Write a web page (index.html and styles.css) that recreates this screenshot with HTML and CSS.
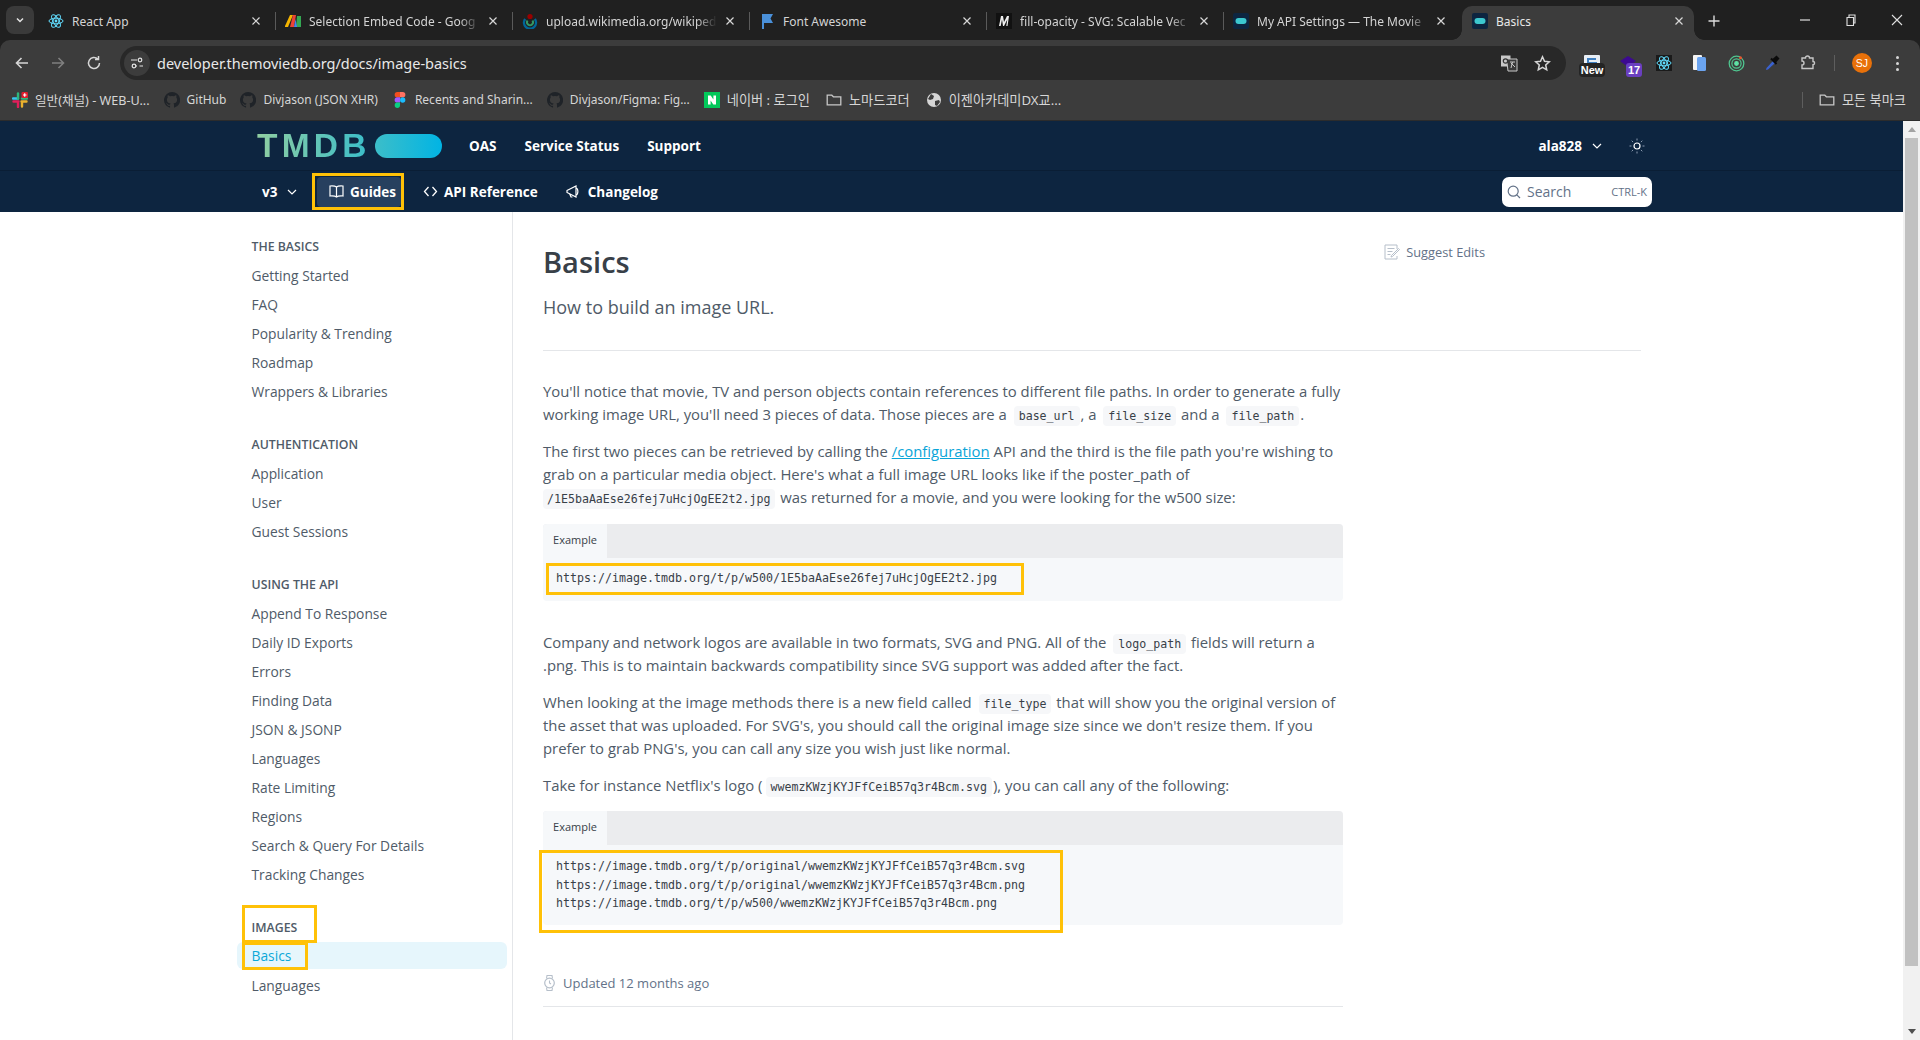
FILE: index.html
```html
<!DOCTYPE html>
<html lang="en">
<head>
<meta charset="utf-8">
<title>Basics</title>
<link rel="stylesheet" href="styles.css">
</head>
<body>
<svg class="defs" width="0" height="0" aria-hidden="true">
  <defs>
    <symbol id="tmdb-ico" viewBox="0 0 16 16"><rect width="16" height="16" rx="2" fill="#0d2540"/><rect x="2.5" y="5" width="11" height="6" rx="3" fill="#3cc8cf"/></symbol>
    <symbol id="react-ico" viewBox="0 0 16 16"><g fill="none" stroke="#61dafb" stroke-width="1"><ellipse cx="8" cy="8" rx="7" ry="2.8"/><ellipse cx="8" cy="8" rx="7" ry="2.8" transform="rotate(60 8 8)"/><ellipse cx="8" cy="8" rx="7" ry="2.8" transform="rotate(120 8 8)"/></g><circle cx="8" cy="8" r="1.4" fill="#61dafb"/></symbol>
    <symbol id="gh-ico" viewBox="0 0 16 16"><path fill="#1f2328" d="M8 0a8 8 0 0 0-2.53 15.59c.4.07.55-.17.55-.38v-1.34c-2.23.48-2.7-1.07-2.7-1.07-.36-.93-.89-1.17-.89-1.17-.73-.5.05-.49.05-.49.8.06 1.23.83 1.23.83.72 1.22 1.87.87 2.33.66.07-.52.28-.87.5-1.07-1.78-.2-3.64-.89-3.64-3.95 0-.87.31-1.59.82-2.15-.08-.2-.36-1.02.08-2.12 0 0 .67-.22 2.2.82a7.6 7.6 0 0 1 4 0c1.53-1.04 2.2-.82 2.2-.82.44 1.1.16 1.92.08 2.12.51.56.82 1.27.82 2.15 0 3.07-1.87 3.75-3.65 3.95.29.25.54.73.54 1.48v2.2c0 .21.15.46.55.38A8 8 0 0 0 8 0z"/></symbol>
    <symbol id="folder-ico" viewBox="0 0 16 16"><path fill="none" stroke="#c7c7c7" stroke-width="1.3" d="M1.2 3.2h4.6l1.6 1.6h7.4v8H1.2z"/></symbol>
    <symbol id="x-ico" viewBox="0 0 10 10"><path stroke="#d8d8d8" stroke-width="1.2" d="M1.5 1.5l7 7M8.5 1.5l-7 7"/></symbol>
  </defs>
</svg>

<div class="chrome">
  <div class="tabstrip">
    <div class="tab-menu"><svg width="10" height="10" viewBox="0 0 10 10"><path d="M2 3.5l3 3 3-3" fill="none" stroke="#e3e3e3" stroke-width="1.5"/></svg></div>
    <div class="tab">
      <svg class="fav" width="16" height="16"><use href="#react-ico"/></svg><span class="tab-t">React App</span>
      <svg class="tab-x" width="10" height="10"><use href="#x-ico"/></svg>
    </div>
    <div class="tab">
      <svg class="fav" width="16" height="16" viewBox="0 0 16 16"><path fill="#f4b400" d="M0 13L5 2h3L3 14H0z"/><path fill="#ea4335" d="M5 14L8 2h3L9 14z"/><path fill="#34a853" d="M11 14l1-11h4v11z"/><path fill="#4285f4" d="M9 14l1.500-8 1.500 8z"/></svg><span class="tab-t tab-fade">Selection Embed Code - Goog</span>
      <svg class="tab-x" width="10" height="10"><use href="#x-ico"/></svg>
    </div>
    <div class="tab">
      <svg class="fav" width="16" height="16" viewBox="0 0 16 16"><path fill="none" stroke="#006699" stroke-width="2.4" d="M3.2 6a6 6 0 1 0 9.6 0"/><path fill="none" stroke="#339966" stroke-width="2" d="M5.5 7.5a3 3 0 1 0 5 0"/><circle cx="8" cy="3.5" r="2.6" fill="#990000"/></svg><span class="tab-t tab-fade">upload.wikimedia.org/wikipedi</span>
      <svg class="tab-x" width="10" height="10"><use href="#x-ico"/></svg>
    </div>
    <div class="tab">
      <svg class="fav" width="16" height="16" viewBox="0 0 16 16"><path fill="#4a90d9" d="M3 1h11l-2.500 4.500L14 10H5v6H3z"/></svg><span class="tab-t">Font Awesome</span>
      <svg class="tab-x" width="10" height="10"><use href="#x-ico"/></svg>
    </div>
    <div class="tab">
      <svg class="fav" width="16" height="16" viewBox="0 0 16 16"><rect width="16" height="16" fill="#111"/><path d="M3 13L5 3h2l1 6 3-6h2l-1.500 10H10.300l1-6.500L8 13H7L6 6.500 4.700 13z" fill="#eee"/></svg><span class="tab-t tab-fade">fill-opacity - SVG: Scalable Vec</span>
      <svg class="tab-x" width="10" height="10"><use href="#x-ico"/></svg>
    </div>
    <div class="tab">
      <svg class="fav" width="16" height="16"><use href="#tmdb-ico"/></svg><span class="tab-t tab-fade">My API Settings — The Movie</span>
      <svg class="tab-x" width="10" height="10"><use href="#x-ico"/></svg>
    </div>
    <div class="tab tab-active">
      <svg class="fav" width="16" height="16"><use href="#tmdb-ico"/></svg><span class="tab-t">Basics</span>
      <svg class="tab-x" width="10" height="10"><use href="#x-ico"/></svg>
    </div>
    <div class="tab-new"><svg width="14" height="14" viewBox="0 0 14 14"><path d="M7 1.5v11M1.5 7h11" stroke="#dcdcdc" stroke-width="1.4"/></svg></div>
    <div class="winctl">
      <svg width="12" height="12" viewBox="0 0 12 12"><path d="M1 6h10" stroke="#e0e0e0" stroke-width="1.2"/></svg>
      <svg width="12" height="12" viewBox="0 0 12 12"><path d="M2 3.5h6.5v8H2zM4 3.5V1h6v8H8.5" fill="none" stroke="#e0e0e0" stroke-width="1.1"/></svg>
      <svg width="12" height="12" viewBox="0 0 12 12"><path d="M1 1l10 10M11 1L1 11" stroke="#e0e0e0" stroke-width="1.1"/></svg>
    </div>
  </div>

  <div class="toolbar">
    <div class="nav-btns">
      <svg width="16" height="16" viewBox="0 0 16 16"><path d="M14 8H2.5M7.5 3L2.5 8l5 5" fill="none" stroke="#d6d6d6" stroke-width="1.6"/></svg>
      <svg width="16" height="16" viewBox="0 0 16 16"><path d="M2 8h11.5M8.5 3l5 5-5 5" fill="none" stroke="#7f7f7f" stroke-width="1.6"/></svg>
      <svg width="16" height="16" viewBox="0 0 16 16"><path d="M13.5 8A5.5 5.5 0 1 1 11.8 4M12.5 1v3.5H9" fill="none" stroke="#d6d6d6" stroke-width="1.5"/></svg>
    </div>
    <div class="omnibox">
      <span class="site-ico"><svg width="14" height="14" viewBox="0 0 14 14"><g fill="none" stroke="#e3e3e3" stroke-width="1.2"><path d="M1 4h6M9.5 10H13"/><circle cx="10" cy="4" r="1.8"/><circle cx="4" cy="10" r="1.8"/><path d="M6 10h1"/></g></svg></span>
      <span class="url">developer.themoviedb.org/docs/image-basics</span>
      <svg class="omni-r1" width="18" height="18" viewBox="0 0 18 18"><path d="M1 1.5h9.5v11H1z" fill="#c7c7c7"/><path d="M6.5 5h10.5v12H8z" fill="#3a3a3a" stroke="#c7c7c7" stroke-width="1"/><circle cx="5.5" cy="7" r="2.2" fill="none" stroke="#333" stroke-width="1.2"/><path d="M10 8h5M12.5 8l-1.5 6M11 9l4 4" stroke="#c7c7c7" stroke-width="1" fill="none"/></svg>
      <svg class="omni-r2" width="17" height="17" viewBox="0 0 17 17"><path d="M8.5 1.8l2 4.5 4.8.5-3.6 3.2 1 4.8-4.2-2.5-4.2 2.5 1-4.8L1.7 6.8l4.8-.5z" fill="none" stroke="#d6d6d6" stroke-width="1.5"/></svg>
    </div>
    <div class="ext-row">
      <span class="ext">
        <svg width="16" height="16" viewBox="0 0 16 16"><rect x="0" y="0" width="16" height="13" rx="1" fill="#e8eef5"/><path d="M3 3h9v2H5v2h8v2H3" fill="#3f7fc0"/></svg>
        <b class="ext-new">New</b>
      </span>
      <span class="ext">
        <svg width="16" height="16" viewBox="0 0 16 16"><path d="M8 1l8 5-8 6-8-6z" fill="#3d0a91"/></svg>
        <b class="ext-num">17</b>
      </span>
      <span class="ext ext-dark"><svg width="16" height="16"><use href="#react-ico"/></svg></span>
      <span class="ext"><svg width="14" height="16" viewBox="0 0 14 16"><rect x="0" y="0" width="9" height="15" rx="1" fill="#f4f4f4"/><rect x="4" y="2" width="9" height="14" rx="1.5" fill="#6ba4f0"/></svg></span>
      <span class="ext"><svg width="17" height="17" viewBox="0 0 17 17"><circle cx="8.5" cy="8.5" r="7.3" fill="none" stroke="#4fc58f" stroke-width="1.3"/><circle cx="8.5" cy="8.5" r="4.6" fill="none" stroke="#4fc58f" stroke-width="1.2"/><circle cx="8.5" cy="8.5" r="2.4" fill="#5fe0a5"/><circle cx="12.5" cy="2.7" r="1.5" fill="#e8552d"/></svg></span>
      <span class="ext"><svg width="16" height="16" viewBox="0 0 16 16"><path d="M9 6l-6.500 7L2 15l2-.5 7-6.500z" fill="#3a62d0"/><path d="M8.500 4l4-3.500 3 3-3.500 4z" fill="#0b0b0b"/><path d="M7 3.500l5.500 5.500" stroke="#0b0b0b" stroke-width="2"/></svg></span>
      <span class="ext"><svg width="16" height="16" viewBox="0 0 16 16"><path d="M2 3h3.500a2 2 0 0 1 4 0H13v3.500a1.600 1.600 0 0 1 0 3.200V13.500H2V10a2 2 0 0 0 0-4z" fill="none" stroke="#c7c7c7" stroke-width="1.400"/></svg></span>
      <i class="ext-sep"></i>
      <span class="avatar">SJ</span>
      <span class="dots"><i></i><i></i><i></i></span>
    </div>
  </div>

  <div class="bookmarks">
    <div class="bm bm-mixed">
      <svg width="16" height="16" viewBox="0 0 16 16"><path d="M1 6.500h5" stroke="#36c5f0" stroke-width="2.400" stroke-linecap="round"/><path d="M6 1.500v5" stroke="#2eb67d" stroke-width="2.400" stroke-linecap="round"/><path d="M10 6.500h5" stroke="#2eb67d" stroke-width="2.400" stroke-linecap="round"/><path d="M1.500 9.500h5M6 10v5" stroke="#e01e5a" stroke-width="2.400" stroke-linecap="round"/><path d="M10 9.500v5M9.500 9.500h5" stroke="#ecb22e" stroke-width="2.400" stroke-linecap="round"/><rect x="9.500" y="0" width="6.500" height="6" rx="1.200" fill="#e01e2e"/><path d="M12.700 1.200v3.500M11 3h3.500" stroke="#fff" stroke-width="1.200"/></svg>
      <span>일반(채널) - WEB-U...</span>
    </div>
    <div class="bm"><svg width="16" height="16"><use href="#gh-ico"/></svg><span>GitHub</span></div>
    <div class="bm"><svg width="16" height="16"><use href="#gh-ico"/></svg><span>Divjason (JSON XHR)</span></div>
    <div class="bm">
      <svg width="16" height="16" viewBox="0 0 16 16"><path d="M5 0h3v5.300H5.300a2.650 2.650 0 0 1 0-5.300z" fill="#f24e1e"/><path d="M8 0h2.700a2.650 2.650 0 0 1 0 5.300H8z" fill="#ff7262"/><path d="M5.300 5.300H8v5.300H5.300a2.650 2.650 0 0 1 0-5.300z" fill="#a259ff"/><circle cx="10.700" cy="8" r="2.650" fill="#1abcfe"/><path d="M5.300 10.600H8v2.700a2.650 2.650 0 1 1-2.700-2.700z" fill="#0acf83"/></svg>
      <span>Recents and Sharin...</span>
    </div>
    <div class="bm"><svg width="16" height="16"><use href="#gh-ico"/></svg><span>Divjason/Figma: Fig...</span></div>
    <div class="bm bm-ko">
      <svg width="16" height="16" viewBox="0 0 16 16"><rect width="16" height="16" fill="#03c75a"/><path d="M4 3.500h2.700l2.700 4v-4H12v9H9.300l-2.700-4v4H4z" fill="#fff"/></svg>
      <span>네이버 : 로그인</span>
    </div>
    <div class="bm bm-ko"><svg width="16" height="16"><use href="#folder-ico"/></svg><span>노마드코더</span></div>
    <div class="bm bm-ko">
      <svg width="16" height="16" viewBox="0 0 16 16"><circle cx="8" cy="8" r="7" fill="#d5d5d5"/><path d="M5 2l3 2-1 3-3 1-2-1zM9 9l4-1 1 2-3 4-2-1z" fill="#3c3c3c"/></svg>
      <span>이젠아카데미DX교...</span>
    </div>
    <div class="bm-right">
      <i class="bm-sep"></i>
      <div class="bm bm-ko"><svg width="16" height="16"><use href="#folder-ico"/></svg><span>모든 북마크</span></div>
    </div>
  </div>
</div>

<div class="viewport">
  <div class="page">
    <header class="site-head">
      <div class="head-top">
        <a class="logo"><span class="logo-t">TMDB</span><i class="logo-pill"></i></a>
        <nav class="top-links"><a>OAS</a><a>Service Status</a><a>Support</a></nav>
        <div class="user">
          <span>ala828</span>
          <svg width="10" height="10" viewBox="0 0 10 10"><path d="M1 3l4 4 4-4" fill="none" stroke="#fff" stroke-width="1.200"/></svg>
          <svg class="sun" width="16" height="16" viewBox="0 0 16 16"><circle cx="8" cy="8" r="3" fill="none" stroke="#fff" stroke-width="1.200"/><path d="M8 .5v2M8 13.500v2M.5 8h2M13.500 8h2M2.700 2.700l1.400 1.400M11.900 11.900l1.400 1.400M2.700 13.300l1.400-1.400M11.900 4.100l1.400-1.400" stroke="#8b9bb0" stroke-width="1"/></svg>
        </div>
      </div>
      <div class="head-bot">
        <div class="ver">v3 <svg width="10" height="10" viewBox="0 0 10 10"><path d="M1 3l4 4 4-4" fill="none" stroke="#fff" stroke-width="1.200"/></svg></div>
        <a class="hnav hnav-on"><i class="mark mark-g"></i>
          <svg width="15" height="15" viewBox="0 0 15 15"><path d="M7.500 3C6 1.800 3.500 1.800 1 2v10c2.500-.2 5-.2 6.500 1 1.500-1.200 4-1.200 6.500-1V2c-2.500-.2-5-.2-6.500 1zM7.500 3v10" fill="none" stroke="#fff" stroke-width="1.200"/></svg>
          <span>Guides</span>
        </a>
        <a class="hnav hnav-api">
          <svg width="15" height="15" viewBox="0 0 15 15"><path d="M5.500 3L1.500 7.500l4 4.500M9.500 3l4 4.500-4 4.500" fill="none" stroke="#fff" stroke-width="1.300"/></svg>
          API Reference
        </a>
        <a class="hnav hnav-log">
          <svg width="16" height="15" viewBox="0 0 16 15"><path d="M1 6.500L10 2v11L1 8.500zM3.500 9.500L5 13h1.500M10 4c2.500.5 2.500 6.500 0 7" fill="none" stroke="#fff" stroke-width="1.200"/></svg>
          Changelog
        </a>
        <div class="search">
          <svg width="14" height="14" viewBox="0 0 14 14"><circle cx="6.200" cy="6.200" r="5" fill="none" stroke="#637288" stroke-width="1.200"/><path d="M9.800 9.800L13 13" stroke="#637288" stroke-width="1.200"/></svg>
          <span class="s-t">Search</span><span class="s-k">CTRL-K</span>
        </div>
      </div>
    </header>

    <div class="body-row">
      <aside class="sidebar">
        <h3 class="side-h">THE BASICS</h3>
        <ul class="side-l"><li>Getting Started</li><li>FAQ</li><li>Popularity &amp; Trending</li><li>Roadmap</li><li>Wrappers &amp; Libraries</li></ul>
        <h3 class="side-h">AUTHENTICATION</h3>
        <ul class="side-l"><li>Application</li><li>User</li><li>Guest Sessions</li></ul>
        <h3 class="side-h">USING THE API</h3>
        <ul class="side-l"><li>Append To Response</li><li>Daily ID Exports</li><li>Errors</li><li>Finding Data</li><li>JSON &amp; JSONP</li><li>Languages</li><li>Rate Limiting</li><li>Regions</li><li>Search &amp; Query For Details</li><li>Tracking Changes</li></ul>
        <h3 class="side-h"><span class="mk-wrap">IMAGES<i class="mark mark-h"></i></span></h3>
        <ul class="side-l">
          <li class="active"><span class="mk-wrap">Basics<i class="mark mark-b"></i></span></li>
          <li>Languages</li>
        </ul>
      </aside>

      <main class="content">
        <div class="title-row">
          <div>
            <h1 class="title">Basics</h1>
            <p class="subtitle">How to build an image URL.</p>
          </div>
          <a class="suggest">
            <svg width="16" height="16" viewBox="0 0 16 16"><path d="M13 5V1H1v14h12v-3M3.500 4.500h7M3.500 7.500h5M3.500 10.500h3" fill="none" stroke="#b6bfca" stroke-width="1"/><path d="M7.500 11.500l7-7 1 1-7 7-1.500.5z" fill="none" stroke="#b6bfca" stroke-width="1"/></svg>
            Suggest Edits
          </a>
        </div>
        <hr class="rule rule-wide">
        <article class="doc">
          <p>You'll notice that movie, TV and person objects contain references to different file paths. In order to generate a fully working image URL, you'll need 3 pieces of data. Those pieces are a <code>base_url</code>, a <code>file_size</code> and a <code>file_path</code>.</p>
          <p>The first two pieces can be retrieved by calling the <a class="lnk">/configuration</a> API and the third is the file path you're wishing to grab on a particular media object. Here's what a full image URL looks like if the poster_path of <code class="code-start">/1E5baAaEse26fej7uHcjOgEE2t2.jpg</code> was returned for a movie, and you were looking for the w500 size:</p>
          <div class="codeblock cb-1">
            <div class="cb-tabs"><span class="cb-tab">Example</span></div>
            <pre class="cb-body">https://image.tmdb.org/t/p/w500/1E5baAaEse26fej7uHcjOgEE2t2.jpg<i class="mark mark-c1"></i></pre>
          </div>
          <p>Company and network logos are available in two formats, SVG and PNG. All of the <code>logo_path</code> fields will return a .png. This is to maintain backwards compatibility since SVG support was added after the fact.</p>
          <p>When looking at the image methods there is a new field called <code>file_type</code> that will show you the original version of the asset that was uploaded. For SVG's, you should call the original image size since we don't resize them. If you prefer to grab PNG's, you can call any size you wish just like normal.</p>
          <p>Take for instance Netflix's logo (<code>wwemzKWzjKYJFfCeiB57q3r4Bcm.svg</code>), you can call any of the following:</p>
          <div class="codeblock cb-2">
            <div class="cb-tabs"><span class="cb-tab">Example</span></div>
            <pre class="cb-body">https://image.tmdb.org/t/p/original/wwemzKWzjKYJFfCeiB57q3r4Bcm.svg
https://image.tmdb.org/t/p/original/wwemzKWzjKYJFfCeiB57q3r4Bcm.png
https://image.tmdb.org/t/p/w500/wwemzKWzjKYJFfCeiB57q3r4Bcm.png<i class="mark mark-c2"></i></pre>
          </div>
          <div class="updated">
            <svg width="13" height="18" viewBox="0 0 13 18"><circle cx="6.500" cy="9" r="4.800" fill="none" stroke="#b6bfca" stroke-width="1.200"/><path d="M3.500 4.500L4 1.500h5l.5 3M3.500 13.500l.5 3h5l.5-3M6.500 6.500V9l1.500 1" fill="none" stroke="#b6bfca" stroke-width="1.100"/></svg>
            Updated 12 months ago
          </div>
          <hr class="rule">
          <p class="help">Did this page help you?</p>
        </article>
      </main>
    </div>
  </div>
  <div class="scrollbar">
    <span class="sb-up"></span>
    <div class="sb-track"><div class="sb-thumb"></div></div>
    <span class="sb-down"></span>
  </div>
</div>
</body>
</html>
```
FILE: styles.css
```css
* { box-sizing: border-box; }
html, body { margin: 0; height: 1040px; overflow: hidden; }
body { display: flex; flex-direction: column; font-family: "Open Sans", "Noto Sans CJK KR", sans-serif; background: #fff; }
.defs { position: absolute; }
h1, h3, p, ul, pre { margin: 0; padding: 0; }
ul { list-style: none; }
i { font-style: normal; }
svg { flex: none; }

/* Browser chrome */
.chrome { flex: none; height: 121px; background: #202020; font-family: "Noto Sans", "Noto Sans CJK KR", sans-serif; }
.tabstrip { height: 40px; display: flex; align-items: center; padding: 6px 0 0 6px; }
.tab-menu { width: 28px; height: 28px; margin: -6px 4px 0 0; background: #3a3a3a; border-radius: 8px; display: flex; align-items: center; justify-content: center; }
.tab { flex: none; width: 237px; height: 34px; padding: 0 14px 4px 10px; display: flex; align-items: center; gap: 8px; color: #d4d4d4; font-size: 12px; position: relative; }
.tab + .tab::before { content: ""; position: absolute; left: 0; top: 6px; height: 18px; width: 1px; background: #5a5a5a; }
.tab-active { background: #3c3c3c; border-radius: 10px 10px 0 0; color: #e8e8e8; margin-left: 2px; width: 232px; padding-right: 10px; }
.tab-active.tab::before, .tab-active::after { content: ""; position: absolute; bottom: 0; top: auto; width: 10px; height: 10px; }
.tab-active.tab::before { left: -10px; background: radial-gradient(circle at 0 0, transparent 9.500px, #3c3c3c 10px); }
.tab-active::after { right: -10px; background: radial-gradient(circle at 100% 0, transparent 9.500px, #3c3c3c 10px); }
.tab-t { flex: 1; white-space: nowrap; overflow: hidden; }
.tab-fade { -webkit-mask-image: linear-gradient(90deg, #000 88%, transparent); mask-image: linear-gradient(90deg, #000 88%, transparent); }
.tab-new { width: 40px; height: 34px; padding-bottom: 4px; display: flex; align-items: center; justify-content: center; }
.winctl { margin-left: auto; display: flex; gap: 34px; padding: 0 17px 6px 0; }

.toolbar { height: 42px; background: #3c3c3c; border-radius: 10px 10px 0 0; display: flex; align-items: flex-start; padding-top: 6px; }
.nav-btns { width: 120px; height: 34px; display: flex; align-items: center; gap: 20px; padding-left: 14px; }
.omnibox { width: 1446px; height: 34px; background: #282828; border-radius: 17px; display: flex; align-items: center; padding: 0 15px 0 4px; color: #e8e8e8; }
.site-ico { width: 26px; height: 26px; border-radius: 50%; background: #3c3c3c; display: flex; align-items: center; justify-content: center; }
.url { margin-left: 7px; font-size: 14.5px; flex: 1; white-space: nowrap; }
.omni-r2 { margin-left: 16px; }
.ext-row { flex: 1; height: 34px; display: flex; align-items: center; padding-left: 8px; position: relative; }
.ext { width: 36px; height: 34px; flex: none; display: flex; align-items: center; justify-content: center; position: relative; }
.ext-dark svg { background: #1a1a1a; }
.ext-new { position: absolute; left: 5px; top: 17px; width: 26px; background: #242424; color: #fff; font-size: 11px; line-height: 14px; border-radius: 4px; text-align: center; font-family: "Liberation Sans", sans-serif; }
.ext-num { position: absolute; left: 16px; top: 17px; width: 16px; background: #6a3fc0; color: #fff; font-size: 11px; line-height: 14px; border-radius: 3px; text-align: center; font-family: "Liberation Sans", sans-serif; }
.ext-sep { width: 1px; height: 16px; background: #5e5e5e; margin: 0 17px 0 8px; flex: none; }
.avatar { width: 20px; height: 20px; border-radius: 50%; background: #e8710a; color: #fff; font-size: 10.5px; text-align: center; line-height: 20px; flex: none; font-family: "Liberation Sans", sans-serif; }
.dots { display: flex; flex-direction: column; gap: 3px; margin-left: 24px; }
.dots i { width: 3px; height: 3px; border-radius: 50%; background: #d6d6d6; }

.bookmarks { height: 39px; background: #3c3c3c; border-bottom: 1px solid #2c2c2c; display: flex; align-items: center; padding: 0 0 3px 12px; color: #d6d6d6; font-size: 12px; }
.bm { display: flex; align-items: center; gap: 7px; white-space: nowrap; margin-right: 14px; }
.bm-mixed { font-size: 12.600px; }
.bm-ko { font-size: 13.200px; margin-right: 16px; }
.bm-right { margin-left: auto; display: flex; align-items: center; gap: 16px; }
.bm-right .bm { margin-right: 14px; }
.bm-sep { width: 1px; height: 16px; background: #5e5e5e; }

/* Page area */
.viewport { flex: 1; display: flex; min-height: 0; }
.page { flex: 1; min-width: 0; overflow: hidden; }
.scrollbar { flex: none; width: 17px; background: #f1f1f1; display: flex; flex-direction: column; }
.sb-up, .sb-down { height: 17px; display: flex; align-items: center; justify-content: center; flex: none; }
.sb-up::before { content: ""; border: 4px solid transparent; border-top: 0; border-bottom: 5px solid #a3a3a3; }
.sb-down::before { content: ""; border: 4px solid transparent; border-bottom: 0; border-top: 5px solid #505050; }
.sb-track { flex: 1; padding: 0 2px; }
.sb-thumb { height: 828px; background: #c1c1c1; }

/* Site header */
.site-head { background: #0d2540; color: #fff; height: 91px; font-weight: 700; font-size: 13.500px; }
.head-top { height: 50px; border-bottom: 1px solid #0a1e35; display: flex; align-items: center; padding: 0 0 0 257px; }
.logo { display: flex; align-items: center; gap: 8px; }
.logo-t { font: 700 33.500px/24px "Liberation Sans", sans-serif; letter-spacing: 4.200px; width: 110px; background: linear-gradient(90deg, #90cea1, #3cbec9 100%); -webkit-background-clip: text; background-clip: text; color: transparent; }
.logo-pill { width: 67px; height: 24px; border-radius: 12px; background: linear-gradient(90deg, #3cbec9, #01b4e4); }
.top-links { display: flex; gap: 28px; margin-left: 27px; }
.user { margin-left: auto; margin-right: 258px; display: flex; align-items: center; gap: 10px; }
.sun { margin-left: 17px; }
.head-bot { height: 41px; display: flex; align-items: center; padding-left: 262px; }
.ver { width: 55px; display: flex; align-items: center; gap: 10px; }
.hnav { display: flex; align-items: center; gap: 6px; position: relative; padding: 0 8px; height: 30px; }
.hnav-on { background: #27405f; border-radius: 4px; padding: 0 5px 0 12px; }
.hnav-api { margin-left: 14px; }
.hnav-log { margin-left: 12px; }
.search { margin-left: auto; margin-right: 251px; width: 150px; height: 30px; background: #fff; border-radius: 7px; display: flex; align-items: center; padding: 0 5px; color: #637288; font-weight: 400; font-size: 14px; }
.s-t { margin-left: 6px; }
.s-k { margin-left: auto; font-size: 11px; }

/* Annotation boxes over content */
.mark { position: absolute; border: 3px solid #ffc107; pointer-events: none; inset: -3px; }
.mk-wrap { position: relative; display: inline-block; }
.mark-g { inset: -4px -3px -3px -5px; }
.mark-h { inset: -11px -20px -3px -10px; }
.mark-b { inset: 0 -17px -1px -10px; }
.mark-c1 { inset: 5px auto 6px 3px; width: 478px; }
.mark-c2 { inset: 5px auto -8px -4px; width: 524px; }

/* Body */
.body-row { display: flex; }
.sidebar { flex: none; margin-left: 237px; width: 276px; height: 828px; border-right: 1px solid #e4e6e9; padding: 23px 5px 0 0; color: #4f5b68; font-size: 13.800px; }
.side-h { font-size: 12.300px; font-weight: 600; height: 22px; line-height: 24px; padding-left: 14.500px; color: #4f5b68; }
.side-l { margin: 4px 0 27px; }
.side-l li { height: 29px; line-height: 29px; padding-left: 14.500px; border-radius: 6px; }
.side-l li.active { background: #e6f6fc; color: #0ba8d8; height: 27px; line-height: 27px; margin: 2px 0; }

.content { flex: none; width: 1128px; padding: 0 0 0 30px; color: #384048; }
.title-row { display: flex; justify-content: space-between; padding-top: 30px; height: 138px; width: 1098px; }
.title { font-size: 29px; font-weight: 600; line-height: 40px; color: #384048; }
.subtitle { font-size: 18px; line-height: 24px; margin-top: 13px; color: #4f5b68; }
.suggest { display: flex; align-items: center; gap: 6px; height: 20px; margin: 0 156px 0 0; font-size: 12.800px; color: #637288; }
.rule { border: 0; height: 1px; background: #e4e6e9; margin: 0; }
.rule-wide { width: 1098px; }

.doc { width: 800px; padding-top: 29px; font-size: 14.860px; line-height: 23px; color: #4f5b68; }
.doc p { margin: 0 0 14px; }
code { font: 11.600px "DejaVu Sans Mono", monospace; background: #f6f7f9; color: #384048; border-radius: 4px; padding: 3px 5px; margin: 0 1px 0 3px; }
code.code-start { margin-left: 0; padding-left: 4px; }
.lnk { color: #0aa5d8; text-decoration: underline; }
.codeblock { background: #f6f8fa; border-radius: 4px; margin-bottom: 30px; }
.cb-1 { margin-top: 15px; }
.cb-tabs { height: 34px; background: #ebecee; border-radius: 4px 4px 0 0; }
.cb-tab { display: block; width: 64px; height: 34px; background: #f6f8fa; font-size: 11px; line-height: 32px; text-align: center; color: #384048; border-radius: 4px 0 0 0; }
.cb-body { position: relative; font: 11.630px/18.500px "DejaVu Sans Mono", monospace; color: #384048; padding: 11px 13px 14px; }
.cb-1 .cb-body { height: 43px; }
.cb-2 { margin-top: 14px; }
.cb-2 .cb-body { height: 80px; padding-top: 12px; }
.updated { display: flex; align-items: center; gap: 7px; font-size: 13px; color: #637288; margin-top: 46px; height: 24px; }
.doc > .rule { margin-top: 11px; }
.doc p.help { margin-top: 32px; text-align: left; font-size: 14px; }
```
